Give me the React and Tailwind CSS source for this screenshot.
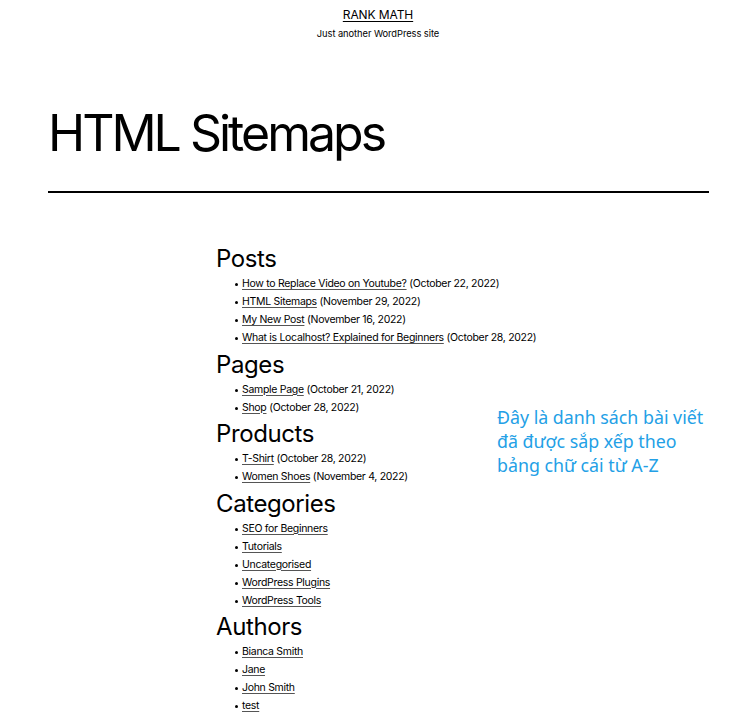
import React from "react";

const sections = [
  {
    title: "Posts",
    items: [
      ["How to Replace Video on Youtube?", "(October 22, 2022)"],
      ["HTML Sitemaps", "(November 29, 2022)"],
      ["My New Post", "(November 16, 2022)"],
      ["What is Localhost? Explained for Beginners", "(October 28, 2022)"],
    ],
  },
  {
    title: "Pages",
    items: [
      ["Sample Page", "(October 21, 2022)"],
      ["Shop", "(October 28, 2022)"],
    ],
  },
  {
    title: "Products",
    items: [
      ["T-Shirt", "(October 28, 2022)"],
      ["Women Shoes", "(November 4, 2022)"],
    ],
  },
  {
    title: "Categories",
    items: [
      ["SEO for Beginners"],
      ["Tutorials"],
      ["Uncategorised"],
      ["WordPress Plugins"],
      ["WordPress Tools"],
    ],
  },
  {
    title: "Authors",
    items: [["Bianca Smith"], ["Jane"], ["John Smith"], ["test"]],
  },
];

export default function App() {
  return (
    <div
      className="relative h-[724px] w-[745px] overflow-hidden bg-white text-black"
      style={{ fontFamily: "Inter, 'Liberation Sans', sans-serif" }}
    >
      <header className="flex flex-col items-center pl-[11px] pt-[6px]">
        <a className="text-[12px] leading-[18px] tracking-[-0.1px] underline decoration-1 underline-offset-2">RANK MATH</a>
        <p className="mt-[3px] text-[9.3px] leading-[13px] tracking-[-0.05px]">Just another WordPress site</p>
      </header>

      <div className="pl-[48px]">
        <h1 className="mt-[63px] text-[50px] font-normal leading-[60px] tracking-[-3px]">HTML Sitemaps</h1>
        <div className="mt-[28px] h-[2px] w-[661px] bg-black" />
      </div>

      <main className="pl-[216px] pt-[52px]">
        {sections.map((s, i) => (
          <section key={s.title} className={i === 0 ? "" : "mt-[3.5px]"}>
            <h2 className="text-[24px] leading-[28px] tracking-[-0.4px]">{s.title}</h2>
            <ul className="mt-[2px] pl-[26px]">
              {s.items.map((it) => (
                <li key={it[0]} className="relative text-[10.5px] leading-[18px] tracking-[-0.3px]">
                  <span className="absolute left-[-7px] top-[8px] h-[3px] w-[3px] rounded-full bg-black" />
                  <a className="underline decoration-[#555] decoration-1 underline-offset-2">{it[0]}</a>
                  {it[1] ? <span> {it[1]}</span> : null}
                </li>
              ))}
            </ul>
          </section>
        ))}
      </main>

      <div
        className="absolute left-[497px] top-[405px] text-[17.8px] leading-[24px] text-[#23a0e6]"
        style={{ fontFamily: "'Noto Sans', 'Open Sans', sans-serif" }}
      >
        <p>Đây là danh sách bài viết</p>
        <p>đã được sắp xếp theo</p>
        <p>bảng chữ cái từ A-Z</p>
      </div>
    </div>
  );
}
